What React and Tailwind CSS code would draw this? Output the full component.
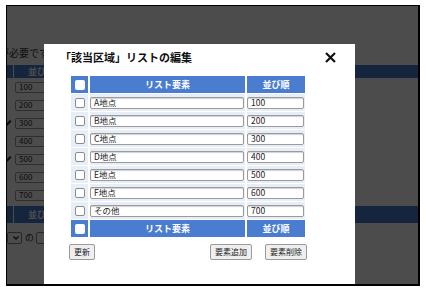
import React from "react";

const rows = [
  ["A地点", "100"],
  ["B地点", "200"],
  ["C地点", "300"],
  ["D地点", "400"],
  ["E地点", "500"],
  ["F地点", "600"],
  ["その他", "700"],
];

function Box() {
  return <div className="w-[10px] h-[10px] rounded-[2px] border border-[#8c8c8c] bg-white" />;
}

function Field({ v }) {
  return (
    <div className="w-full h-[12px] flex items-center rounded-[2px] border border-[#9a9a9a] bg-white shadow-[inset_0_1px_1px_rgba(0,0,0,0.18)] pl-[3px] text-[8.5px] leading-none text-[#222] whitespace-nowrap overflow-hidden">
      {v}
    </div>
  );
}

function Pencil() {
  return (
    <svg width="8" height="9" viewBox="0 0 8 9" className="-ml-[3px]">
      <path d="M1 8 L2 5 L6 1 L7.5 2.5 L3.5 6.5 Z" fill="#222" />
    </svg>
  );
}

function Btn({ children }) {
  return (
    <div className="h-[16px] px-[4px] flex items-center rounded-[2px] border border-[#9a9a9a] bg-[#efefef] text-[8px] leading-none text-[#222]">
      {children}
    </div>
  );
}

export default function App() {
  const blue = "bg-[#4a7dcf]";
  return (
    <div className="w-[426px] h-[292px] bg-white pl-[6px] pt-[5px] font-['Noto_Sans_CJK_JP',sans-serif]">
      <div className="relative w-[414px] h-[281px] border-t border-l border-r-2 border-b-2 border-black overflow-hidden">
        {/* background page */}
        <div className="absolute inset-0 bg-white overflow-hidden">
          <div className="h-[41px]" />
          <div className="h-[12px] overflow-hidden">
            <div className="-ml-[8px] text-[10px] leading-[12px] text-[#333] whitespace-nowrap">が必要です</div>
          </div>
          <div className={`mt-[6px] h-[13px] flex ${blue}`}>
            <div className="w-[6px]" />
            <div className="w-[1px] bg-white" />
            <div className="w-[55px] flex items-center justify-center text-white font-bold text-[9px]">並び順</div>
          </div>
          <div className="flex flex-col">
            {rows.map((r, i) => (
              <div key={i} className="h-[18px] flex items-center">
                <div className="w-[8px] flex items-center">{i === 2 || i === 4 ? <Pencil /> : null}</div>
                <div className="w-[50px]">
                  <div className="h-[11px] flex items-center rounded-[2px] border border-[#9a9a9a] bg-white pl-[3px] text-[8px] leading-none text-[#222]">{r[1]}</div>
                </div>
              </div>
            ))}
          </div>
          <div className={`mt-[2px] h-[17px] flex ${blue}`}>
            <div className="w-[6px]" />
            <div className="w-[1px] bg-white" />
            <div className="w-[55px] flex items-center justify-center text-white font-bold text-[9px]">並び順</div>
          </div>
          <div className="mt-[9px] h-[12px] flex items-center">
            <div className="w-[15px] h-[12px] rounded-[2px] border border-[#888] bg-white flex items-center justify-end pr-[2px]">
              <svg width="6" height="4" viewBox="0 0 6 4"><path d="M0.5 0.5 L3 3 L5.5 0.5" stroke="#222" strokeWidth="1.3" fill="none" /></svg>
            </div>
            <div className="ml-[3px] text-[9px] text-[#333]">の</div>
            <div className="ml-[2px] w-[20px] h-[12px] rounded-[2px] border border-[#888] bg-white" />
          </div>
        </div>
        {/* overlay */}
        <div className="absolute inset-0 bg-black/70" />
        {/* modal */}
        <div className="absolute left-[37px] top-[38px] w-[311px] bottom-0 bg-white">
          <div className="h-[20px] pt-[6px] pl-[16px] pr-[19px] flex items-center justify-between">
            <span className="text-[11px] leading-[14px] font-bold text-[#111] whitespace-nowrap">「該当区域」リストの編集</span>
            <svg width="11" height="11" viewBox="0 0 11 11">
              <path d="M1 1 L10 10 M10 1 L1 10" stroke="#111" strokeWidth="2.2" />
            </svg>
          </div>
          <div className="ml-[27px] mt-[12px] w-[234px] grid grid-cols-[17px_155px_58px] auto-rows-[17px] gap-x-[2px] gap-y-[1px]">
            <div className={`${blue} flex items-center justify-center`}>
              <div className="w-[10px] h-[10px] rounded-[2px] bg-white" />
            </div>
            <div className={`${blue} flex items-center justify-center text-white font-bold text-[9px]`}>リスト要素</div>
            <div className={`${blue} flex items-center justify-center text-white font-bold text-[9px]`}>並び順</div>
            {rows.map((r, i) => (
              <React.Fragment key={i}>
                <div className="bg-[#e8eef8] flex items-center justify-center"><Box /></div>
                <div className="bg-[#e8eef8] flex items-center pr-[1px]"><Field v={r[0]} /></div>
                <div className="bg-[#e8eef8] flex items-center pr-[1px]"><Field v={r[1]} /></div>
              </React.Fragment>
            ))}
            <div className={`${blue} flex items-center justify-center`}>
              <div className="w-[10px] h-[10px] rounded-[2px] bg-white" />
            </div>
            <div className={`${blue} flex items-center justify-center text-white font-bold text-[9px]`}>リスト要素</div>
            <div className={`${blue} flex items-center justify-center text-white font-bold text-[9px]`}>並び順</div>
          </div>
          <div className="mt-[7px] ml-[25px] w-[238px] flex justify-between">
            <Btn>更新</Btn>
            <div className="flex gap-[13px]">
              <Btn>要素追加</Btn>
              <Btn>要素削除</Btn>
            </div>
          </div>
        </div>
      </div>
    </div>
  );
}
